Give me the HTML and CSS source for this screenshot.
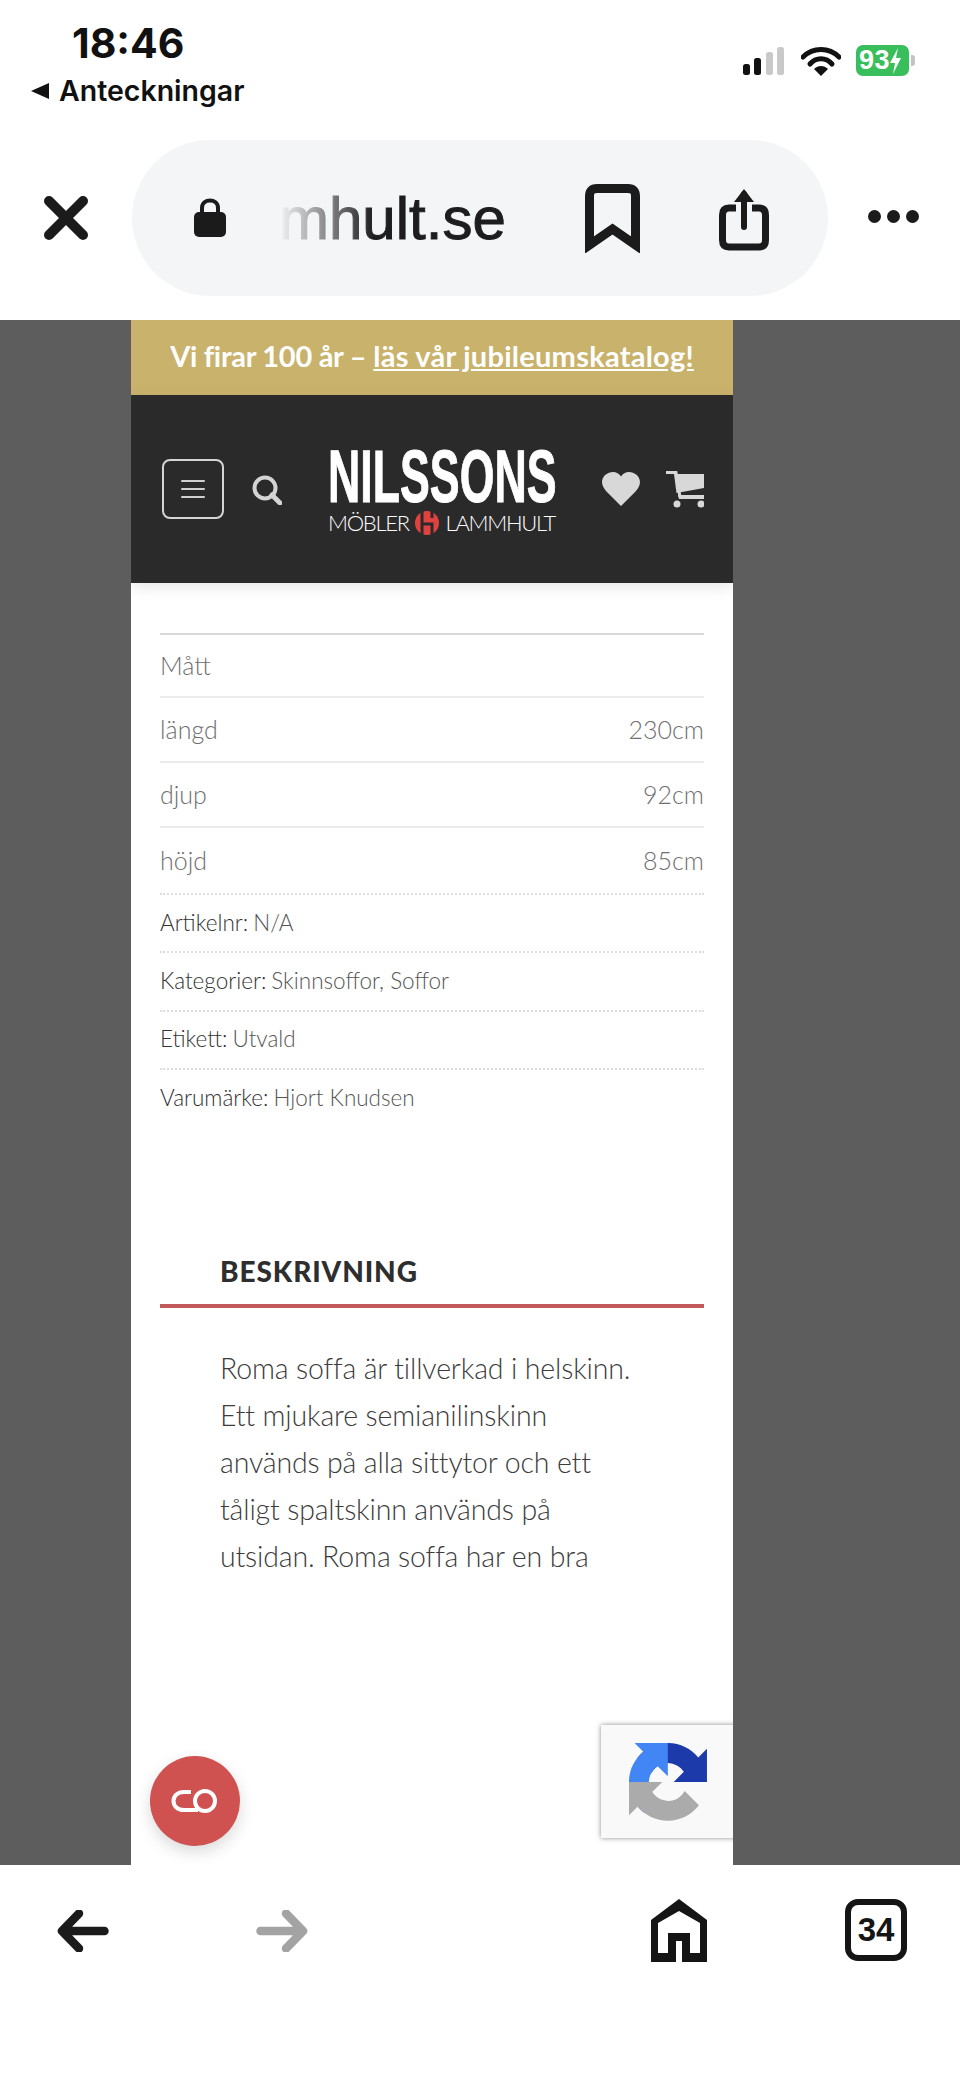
FILE: index.html
```html
<!DOCTYPE html>
<html lang="sv">
<head>
  <meta charset="UTF-8" />
  <meta name="viewport" content="width=device-width, initial-scale=1.0"/>
  <title>Nilssons Möbler Lammhult</title>
  <link rel="stylesheet" href="styles.css">
</head>
<body>
  <header class="browser-top">
    <div class="status">
      <div class="status-left">
        <div class="time">18:46</div>
        <div class="back-app"><span class="back-tri"></span>Anteckningar</div>
      </div>
      <div class="status-right">
        <svg class="signal" width="42" height="28" viewBox="0 0 42 28">
          <rect x="0" y="17" width="7" height="11" rx="2.5" fill="#111"/>
          <rect x="11" y="11" width="7" height="17" rx="2.5" fill="#111"/>
          <rect x="23" y="5" width="7" height="23" rx="2.5" fill="#c9c9c9"/>
          <rect x="34" y="0" width="7" height="28" rx="2.5" fill="#c9c9c9"/>
        </svg>
        <svg class="wifi" width="40" height="30" viewBox="0 0 40 30">
          <path d="M2 11 C12 1 28 1 38 11" fill="none" stroke="#111" stroke-width="5" stroke-linecap="round"/>
          <path d="M9 18 C15 11 25 11 31 18" fill="none" stroke="#111" stroke-width="5" stroke-linecap="round"/>
          <path d="M20 30 L13 23 C17 19 23 19 27 23 Z" fill="#111"/>
        </svg>
        <div class="battery">
          <span class="batt-num">93</span>
          <svg width="11" height="26" viewBox="0 0 11 26"><path d="M8 0 L0 15 H5 L3 26 L11 10 H6 Z" fill="#fff"/></svg>
        </div>
        <span class="batt-nub"></span>
      </div>
    </div>
    <div class="urlrow">
      <svg class="close-x" width="44" height="44" viewBox="0 0 44 44">
        <path d="M5 5 L39 39 M39 5 L5 39" stroke="#1b1b1b" stroke-width="10" stroke-linecap="round"/>
      </svg>
      <div class="pill">
        <svg class="lock" width="32" height="40" viewBox="0 0 32 40">
          <path d="M8 18 V11 C8 1 24 1 24 11 V18" fill="none" stroke="#1b1b1b" stroke-width="4"/>
          <rect x="0" y="15" width="32" height="25" rx="5" fill="#1b1b1b"/>
        </svg>
        <span class="url">mhult.se</span>
        <svg class="bookmark" width="55" height="69" viewBox="0 0 55 69">
          <path d="M4.500 61 V12 Q4.500 4.500 12 4.500 H43 Q50.500 4.500 50.500 12 V61 L27.500 45 Z" fill="none" stroke="#1b1b1b" stroke-width="9" stroke-linejoin="miter"/>
        </svg>
        <svg class="share" width="50" height="62" viewBox="0 0 50 62">
          <path d="M17 19 H10 Q3.500 19 3.500 26 V51 Q3.500 58 10 58 H40 Q46.500 58 46.500 51 V26 Q46.500 19 40 19 H33" fill="none" stroke="#1b1b1b" stroke-width="7"/>
          <path d="M25 38 V5" stroke="#1b1b1b" stroke-width="6" stroke-linecap="round"/>
          <path d="M25 0 L35 13 H15 Z" fill="#1b1b1b"/>
        </svg>
      </div>
      <div class="dots"><i></i><i></i><i></i></div>
    </div>
  </header>

  <main class="viewport">
    <div class="site">
      <div class="promo"><span class="promo-lead">Vi firar 100 år –</span> <a href="#">läs vår jubileumskatalog!</a></div>
      <div class="site-head">
        <button class="menu-btn"><span></span><span></span><span></span></button>
        <svg class="search" width="30" height="30" viewBox="0 0 30 30">
          <circle cx="13" cy="13" r="10.500" fill="none" stroke="#d4d4d4" stroke-width="4"/>
          <path d="M20 20 L28 28" stroke="#d4d4d4" stroke-width="5" stroke-linecap="round"/>
        </svg>
        <div class="logo">
          <div class="logo-name"><span>NILSSONS</span></div>
          <div class="logo-sub">
            <span>MÖBLER</span>
            <svg width="24" height="24" viewBox="0 0 24 24">
              <circle cx="12" cy="12" r="12" fill="#e0433f"/>
              <path d="M7 0 V24 M7 13 H17 V24" fill="none" stroke="#2b2a2a" stroke-width="3"/>
              <path d="M17 0 V7" stroke="#2b2a2a" stroke-width="3"/>
            </svg>
            <span>LAMMHULT</span>
          </div>
        </div>
        <svg class="heart" width="38" height="34" viewBox="0 0 38 34">
          <path d="M19 34 L4 19 C-5 9 3 0 11 0 C14.500 0 17 1.500 19 4.500 C21 1.500 23.500 0 27 0 C35 0 43 9 34 19 Z" fill="#d8d8d8"/>
        </svg>
        <svg class="cart" width="38" height="37" viewBox="0 0 38 37">
          <path d="M0 1.500 H10 L14 26" fill="none" stroke="#d8d8d8" stroke-width="3"/>
          <path d="M8 3 H38 V17 L10.500 22 Z" fill="#d8d8d8"/>
          <path d="M12 24 H38 V28 H13 Z" fill="#d8d8d8"/>
          <circle cx="11" cy="33" r="3.500" fill="#d8d8d8"/>
          <circle cx="35" cy="33" r="3.500" fill="#d8d8d8"/>
        </svg>
      </div>

      <div class="content">
        <div class="attrs">
          <div class="attr attr-first"><span>Mått</span></div>
          <div class="attr"><span>längd</span><span>230cm</span></div>
          <div class="attr"><span>djup</span><span>92cm</span></div>
          <div class="attr attr-last"><span>höjd</span><span>85cm</span></div>
        </div>
        <div class="meta">
          <div class="meta-row"><b>Artikelnr:</b> N/A</div>
          <div class="meta-row"><b>Kategorier:</b> Skinnsoffor, Soffor</div>
          <div class="meta-row"><b>Etikett:</b> Utvald</div>
          <div class="meta-row"><b>Varumärke:</b> Hjort Knudsen</div>
        </div>
        <h2 class="tab-title">BESKRIVNING</h2>
        <p class="desc">Roma soffa är tillverkad i helskinn.<br>Ett mjukare semianilinskinn<br>används på alla sittytor och ett<br>tåligt spaltskinn används på<br>utsidan. Roma soffa har en bra</p>
      </div>

      <div class="fab">
        <svg width="48" height="24" viewBox="0 0 48 24">
          <path d="M20 3 H13 C-1 3 -1 21 13 21 H27" fill="none" stroke="#fff" stroke-width="4"/>
          <circle cx="34" cy="12" r="10" fill="none" stroke="#fff" stroke-width="4"/>
        </svg>
      </div>
      <div class="recaptcha">
        <svg width="78" height="78" viewBox="0 0 64 64">
          <path d="M64 31.955l-.033-1.37V4.687l-7.16 7.16C50.948 4.674 42.033.093 32.05.093c-10.4 0-19.622 4.96-25.458 12.64l11.736 11.86a15.55 15.55 0 0 1 4.754-5.334c2.05-1.6 4.952-2.906 8.968-2.906.485 0 .86.057 1.135.163 4.976.393 9.29 3.14 11.83 7.124l-8.307 8.307 26.2.003" fill="#1c3aa9"/>
          <path d="M31.862.002l-1.37.033H4.594l7.16 7.16C4.58 13.055 0 21.97 0 31.953c0 10.4 4.96 19.622 12.64 25.458l11.86-11.736a15.55 15.55 0 0 1-5.334-4.754c-1.6-2.05-2.906-4.952-2.906-8.968 0-.485.057-.86.163-1.135.393-4.976 3.14-9.29 7.124-11.83l8.307 8.307.003-26.2" fill="#4285f4"/>
          <path d="M.002 31.953l.033 1.37v25.898l7.16-7.16c5.86 7.173 14.774 11.754 24.757 11.754 10.4 0 19.622-4.96 25.458-12.64l-11.736-11.86a15.55 15.55 0 0 1-4.754 5.334c-2.05 1.6-4.952 2.906-8.968 2.906-.485 0-.86-.057-1.135-.163-4.976-.393-9.29-3.14-11.83-7.124l8.307-8.307-26.2-.003" fill="#ababab"/>
        </svg>
      </div>
    </div>
  </main>

  <footer class="browser-bottom">
    <svg class="nav-back" width="52" height="42" viewBox="0 0 52 42">
      <path d="M22 3.500 L5 21 L22 38.500 M6 21 H47.500" fill="none" stroke="#1b1b1b" stroke-width="8.500" stroke-linecap="round" stroke-linejoin="round"/>
    </svg>
    <svg class="nav-fwd" width="52" height="42" viewBox="0 0 52 42">
      <path d="M30 3.500 L47 21 L30 38.500 M46 21 H4.500" fill="none" stroke="#a3a3a3" stroke-width="8.500" stroke-linecap="round" stroke-linejoin="round"/>
    </svg>
    <svg class="nav-home" width="56" height="63" viewBox="0 0 56 63">
      <path fill-rule="evenodd" d="M28 0 L56 21 V63 H31 V42 H25 V63 H0 V21 Z M28 12 L7 24 V54 H17 V34 H39 V54 H49 V24 Z" fill="#151515"/>
    </svg>
    <div class="nav-tabs">34</div>
  </footer>
</body>
</html>
```

FILE: styles.css
```css
* { box-sizing: border-box; }

body {
  margin: 0;
  width: 960px;
  height: 2079px;
  overflow: hidden;
  background: #fff;
  font-family: "Liberation Sans", Arial, sans-serif;
  color: #151515;
}

/* phone / browser chrome, top */
.browser-top {
  height: 320px;
  background: #fff;
}

.status {
  height: 140px;
  display: flex;
  justify-content: space-between;
}

.status-left {
  padding: 22px 0 0 31px;
}

.time {
  margin-left: 41px;
  font-family: Inter, sans-serif;
  font-weight: 700;
  font-size: 41px;
  line-height: 42px;
  color: #111;
}

.back-app {
  display: flex;
  align-items: center;
  gap: 10px;
  margin-top: 11px;
  font-family: Inter, sans-serif;
  font-weight: 600;
  font-size: 28.500px;
  line-height: 32px;
  color: #111;
}

.back-tri {
  width: 0;
  height: 0;
  border-style: solid;
  border-width: 8px 18px 8px 0;
  border-color: transparent #111 transparent transparent;
}

.status-right {
  display: flex;
  align-items: flex-start;
  padding: 46px 45px 0 0;
}

.signal { margin-top: 1px; margin-right: 2px; }
.wifi { margin-left: 14px; margin-right: 2px; }

.battery {
  width: 53px;
  height: 31px;
  margin-left: 13px;
  margin-top: -1px;
  padding-left: 3px;
  display: flex;
  align-items: center;
  background: #38bf5c;
  border-radius: 7px;
}

.batt-num {
  font-weight: 700;
  font-size: 27px;
  color: #fff;
  letter-spacing: 0.5px;
}

.batt-nub {
  width: 4px;
  height: 11px;
  margin-top: 9px;
  margin-left: 2px;
  background: #c4c4c4;
  border-radius: 0 3px 3px 0;
}

.urlrow {
  display: flex;
  align-items: center;
  height: 156px;
  padding-left: 44px;
}

.close-x { flex: none; }

.pill {
  width: 696px;
  height: 156px;
  margin-left: 44px;
  padding-left: 62px;
  display: flex;
  align-items: center;
  background: #f4f5f7;
  border-radius: 78px;
}

.lock { margin-top: -2px; }

.url {
  width: 226px;
  margin-left: 53px;
  font-size: 60px;
  color: #1d1d1f;
  white-space: nowrap;
  -webkit-text-stroke: 1px #1d1d1f;
  -webkit-mask-image: linear-gradient(to right, transparent 0, #000 42%);
  mask-image: linear-gradient(to right, transparent 0, #000 42%);
}

.bookmark { margin-left: 80px; margin-top: 0; }
.share { margin-left: 79px; margin-top: 4px; }

.dots {
  display: flex;
  gap: 6px;
  margin-left: 40px;
  margin-top: -3px;
}

.dots i {
  width: 13px;
  height: 13px;
  border-radius: 50%;
  background: #1b1b1b;
}

/* gray page behind the site */
.viewport {
  height: 1545px;
  padding-left: 131px;
  background: #5d5d5d;
}

.site {
  position: relative;
  width: 602px;
  height: 100%;
  background: #fff;
  overflow: hidden;
  font-family: Lato, "Noto Sans", sans-serif;
}

.promo {
  height: 75px;
  background: #c9b26c;
  color: #fff;
  font-weight: 700;
  font-size: 29px;
  line-height: 72px;
  text-align: center;
  white-space: nowrap;
}

.promo-lead { letter-spacing: -0.300px; }
.promo a { color: #fff; letter-spacing: 0.250px; }

.site-head {
  height: 188px;
  background: #2b2a2a;
  display: flex;
  align-items: flex-start;
  box-shadow: 0 4px 14px rgba(0,0,0,0.1);
  position: relative;
}

.menu-btn {
  width: 62px;
  height: 60px;
  margin: 64px 0 0 31px;
  padding: 0;
  display: flex;
  flex-direction: column;
  align-items: center;
  justify-content: center;
  gap: 5.500px;
  background: transparent;
  border: 2px solid #d4d4d4;
  border-radius: 8px;
}

.menu-btn span {
  width: 24px;
  height: 2.500px;
  background: #cfcfcf;
  border-radius: 2px;
}

.search { margin: 80px 0 0 28px; }

.logo {
  width: 227px;
  margin: 54px 0 0 46px;
  color: #fff;
}

.logo-name {
  height: 54px;
  width: 227px;
  font-family: "Liberation Sans", Arial, sans-serif;
  font-weight: 700;
  font-size: 75px;
  line-height: 54px;
  white-space: nowrap;
}

.logo-name span {
  display: inline-block;
  -webkit-text-stroke: 1px #fff;
  transform: scaleX(0.596);
  transform-origin: left center;
}

.logo-sub {
  display: flex;
  align-items: center;
  justify-content: space-between;
  margin-top: 8px;
  height: 24px;
  font-weight: 300;
  font-size: 22px;
  letter-spacing: -1.300px;
  line-height: 24px;
}

.heart { margin: 77px 0 0 47px; }
.cart { margin: 76px 0 0 26px; }

.content {
  padding: 50px 29px 0 29px;
  font-weight: 300;
}

.attrs {
  border-top: 2px solid #d9d9d9;
}

.attr {
  height: 65px;
  padding-bottom: 2px;
  display: flex;
  justify-content: space-between;
  align-items: center;
  border-bottom: 2px solid #ececec;
  font-size: 25px;
  color: #6f6f6f;
}

.attr-first { height: 63px; }
.attr-last { border-bottom: 0; }

.meta-row {
  height: 58.400px;
  padding-bottom: 2px;
  display: flex;
  align-items: center;
  gap: 5px;
  border-top: 2px dotted #ddd;
  font-size: 22.500px;
  color: #555;
}

.meta-row b {
  font-weight: 300;
  color: #333;
}

.tab-title {
  margin: 127px 0 0 0;
  padding: 0 0 16px 60px;
  border-bottom: 4px solid #c25a5c;
  font-size: 28px;
  line-height: 34px;
  letter-spacing: 0.900px;
  font-weight: 900;
  color: #2e2e2e;
}

.desc {
  margin: 37px 0 0 60px;
  font-size: 28.500px;
  letter-spacing: -0.150px;
  line-height: 47px;
  color: #3c3c3c;
}

.fab {
  position: absolute;
  left: 19px;
  top: 1436px;
  width: 90px;
  height: 90px;
  display: flex;
  align-items: center;
  justify-content: center;
  background: #cf5250;
  border-radius: 50%;
  box-shadow: 0 6px 16px rgba(0,0,0,0.15);
}

.recaptcha {
  position: absolute;
  left: 470px;
  top: 1405px;
  width: 140px;
  height: 113px;
  padding: 18px 0 0 28px;
  background: #f9f9f9;
  box-shadow: 0 0 5px rgba(0,0,0,0.45);
}

/* browser chrome, bottom */
.browser-bottom {
  height: 214px;
  background: #fff;
  display: flex;
  align-items: flex-start;
}

.nav-back { margin: 45px 0 0 57px; }
.nav-fwd { margin: 45px 0 0 147px; }
.nav-home { margin: 34px 0 0 343px; }

.nav-tabs {
  width: 62px;
  height: 62px;
  margin: 34px 0 0 138px;
  border: 6px solid #151515;
  border-radius: 13px;
  font-weight: 700;
  font-size: 33px;
  line-height: 50px;
  text-align: center;
}
```
